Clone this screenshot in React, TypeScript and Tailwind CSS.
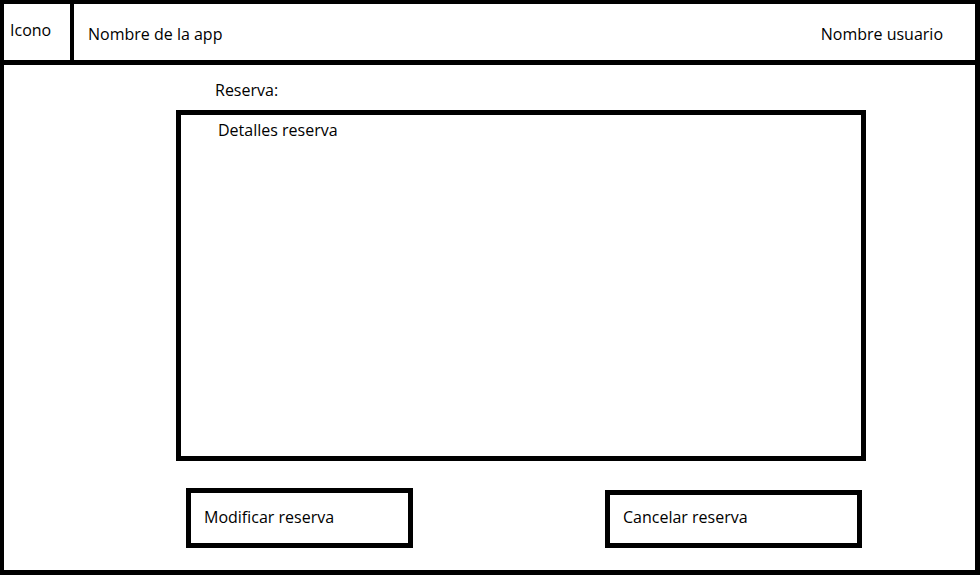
export default function App() {
  return (
    <div className="w-[980px] h-[575px] bg-white text-black border-black border-t-4 border-l-4 border-r-[5px] border-b-[5px] flex flex-col font-['Open_Sans',sans-serif] text-[16px] leading-[22px]">
      {/* header */}
      <div className="flex h-[61px] border-b-[5px] border-black shrink-0">
        <div className="w-[70px] border-r-4 border-black pl-[6px] pt-[15px]">Icono</div>
        <div className="pl-[14px] pt-[19px]">Nombre de la app</div>
        <div className="ml-auto pr-[32px] pt-[19px]">Nombre usuario</div>
      </div>

      {/* main */}
      <div className="flex-1 pl-[172px]">
        <div className="mt-[14px] ml-[39px]">Reserva:</div>
        <div className="mt-[9px] w-[690px] h-[351px] border-[5px] border-black pl-[37px] pt-[4px]">
          Detalles reserva
        </div>
        <div className="flex items-start mt-[27px]">
          <button className="ml-[10px] w-[227px] h-[60px] border-[5px] border-black text-left pl-[13px] pt-[13px] flex items-start">
            Modificar reserva
          </button>
          <button className="ml-[192px] mt-[2px] w-[257px] h-[58px] border-[5px] border-black text-left pl-[13px] pt-[11px] flex items-start">
            Cancelar reserva
          </button>
        </div>
      </div>
    </div>
  );
}
